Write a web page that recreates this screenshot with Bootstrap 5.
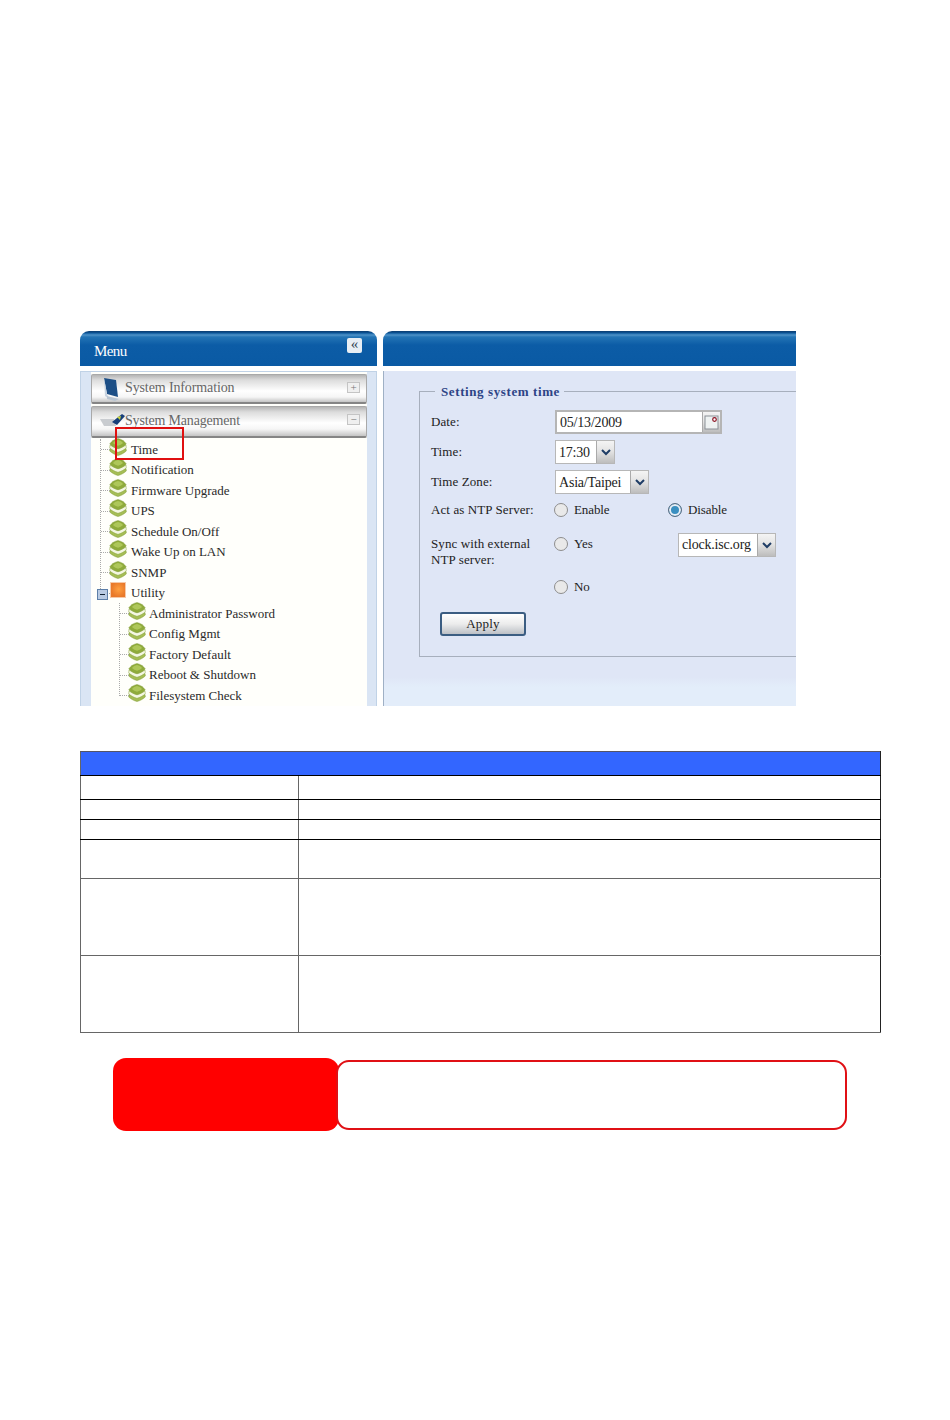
<!DOCTYPE html>
<html lang="en">
<head>
<meta charset="utf-8">
<title>System time</title>
<link rel="stylesheet" href="https://cdn.jsdelivr.net/npm/bootstrap@5.3.0/dist/css/bootstrap.min.css">
<style>
body{background:#fff;font-family:"Liberation Serif",serif;color:#222;font-size:13px;margin:0}
.page-wrap{padding-top:331px;height:1420px;overflow:hidden}
.shot{margin-left:80px;width:716px;height:375px;overflow:hidden}
.left-col{width:297px;flex:none;position:relative}
.right-col{width:413px;flex:none;margin-left:6px}
.blue-head{height:35px;border-radius:9px 9px 0 0;background:linear-gradient(#0b4279 0,#0b4279 1px,#0d5a9f 2px,#4f93c8 4px,#2374b5 6px,#0c5ca6 14px,#0a5aa4 100%);color:#fff;font-size:15px;padding:11px 0 0 14px;position:relative;line-height:18px;letter-spacing:-.6px}
.right-col .blue-head{border-radius:9px 0 0 0}
.collapse-btn{position:absolute;top:7px;right:15px;width:15px;height:15px;background:#e8eef4;border-radius:2px;color:#345;font-size:15px;line-height:12px;text-align:center;letter-spacing:0}
.panel-left{margin-top:5px;height:335px;background:#dae5f4;border:1px solid #c0d2e6;border-bottom:0;padding:0 9px 0 10px}
.panel-inner{background:#fffffb;height:100%;margin:0;position:relative}
.acc-head{height:30px;margin-bottom:2px;border:1px solid #a9a9a9;border-bottom:2px solid #858585;background:linear-gradient(#b5b5b5 0,#dcdcdc 5px,#fff 16px,#f6f6f6 22px,#c4c4c4 100%);color:#666;font-size:14px;line-height:20px;padding:3px 0 0 33px;position:relative;border-radius:2px;letter-spacing:-.12px}
.acc-head+.acc-head{height:32px;margin-bottom:0;padding-top:4px;letter-spacing:-.17px}
.acc-top{padding-top:2px}
.acc-ico{position:absolute;left:9px;top:2px}
.acc-ico-wide{left:8px;top:5px}
.acc-sign{position:absolute;right:6px;top:7px;width:13px;height:11px;background:#efefef;border:1px solid #c4c4c4;color:#777;font-size:11px;line-height:9px;text-align:center}
.tree-list{list-style:none;margin:0;padding:0 0 0 10px;border-left:1px dotted #aaa;margin-left:9px}
.tree-list>li{height:20.5px;display:flex;align-items:center;font-size:13px;position:relative;white-space:nowrap;color:#2a2a2a}
.tree-list>li::before{content:"";position:absolute;left:-10px;top:10px;width:9px;border-top:1px dotted #aaa}
.tree-list>li:last-child::after{content:"";position:absolute;left:-11px;top:11px;bottom:0;width:1px;background:#fffffb}
.tree-list svg{flex:none;margin-right:4px;margin-top:-5px;margin-left:-2px}
.tree-first{margin-top:1px}
.nested-list{margin-left:28px;padding-left:10px}
.nested-list svg{margin-right:3px}
.minus-box{position:absolute;left:-14px;top:6px;width:11px;height:11px;background:#b9cbe3;border:1px solid #5d7fa8;z-index:1}
.minus-box::after{content:"";position:absolute;left:2px;top:4px;width:5px;height:1px;background:#123}
.orange-box{width:16px;height:16px;flex:none;margin:-5px 5px 0 -1px;background:radial-gradient(circle at 55% 45%,#ffa040,#e9792a 70%);border:1px solid #f6c9a8}
.red-mark{position:absolute;left:24px;top:55px;width:69px;height:33px;border:2px solid #e01010;z-index:2}
.panel-right{margin-top:5px;height:335px;background:linear-gradient(#dfe6f6 0,#dfe6f6 306px,#e3edfa 316px,#e3edfa 100%);border-left:1px solid #9fb0c5;padding:10px 0 0 35px;position:relative}
.panel-right fieldset{border:1px solid #a7afbd;border-right:0;width:420px;height:276px;padding:0 0 0 11px;margin:0}
.panel-right legend{float:none;width:auto;font-size:13px;font-weight:700;color:#2d4486;margin:0 0 0 4px;padding:2px 4px 0 6px;line-height:18px;letter-spacing:.6px}
.form-lines{margin-top:6px}
.form-line{display:grid;grid-template-columns:124px 114px 1fr;align-items:center;letter-spacing:.1px}
.line-a,.line-b,.line-c{height:30px}
.line-d{height:26px}
.line-e{height:32px;align-items:start;margin-top:10px;line-height:16px}
.line-e>span:first-child,.line-e .radio-opt{padding-top:3px}
.line-f{height:44px}
.combo{display:inline-flex;height:24px;border:1px solid #b7b7b7;background:#fff;font-size:14px;color:#222;align-items:center;letter-spacing:-.2px}
.combo-txt{padding-left:3px;flex:1;white-space:nowrap}
.combo-arrow{width:18px;height:100%;flex:none;background:linear-gradient(#f4f4f4 0,#e4e4e4 45%,#bdbdbd 100%);border-left:1px solid #aaa;display:flex;align-items:center;justify-content:center}
.combo-date{width:167px;border-width:2px;border-color:#b5b5b5}
.combo-time{width:60px}
.combo-zone{width:94px}
.combo-clock{width:98px;margin-left:9px}
.radio-opt{display:flex;align-items:center;gap:6px;margin:0 0 0 -1px;letter-spacing:-.1px}
.radio-opt .form-check-input{width:14px;height:14px;margin:0;background-color:#e9e9e9;border:1px solid #8d8d8d;float:none;flex:none}
.radio-opt .form-check-input:checked{background-color:#3a8fc0;border-color:#5e6f82;background-image:none;box-shadow:inset 0 0 0 2px #e8eef5}
.apply-btn{width:86px;height:24px;padding:0;background:linear-gradient(#fff 0,#ececec 50%,#bcc0c6 100%);border:2px solid #3b5d82;border-radius:3px;color:#222;font-size:13px;line-height:20px;margin:3px 0 0 9px;letter-spacing:.2px;font-family:"Liberation Serif",serif}
.spec-table{width:801px;height:282px;margin:45px 0 0 80px;border-collapse:collapse;table-layout:fixed}
.col-key{width:218px}
.spec-table td{border:1px solid #666;padding:0;background:#fff}
.spec-table tr:nth-child(n+2):nth-child(-n+4) td{border-bottom-color:#000}
.spec-table tr:first-child td{border-bottom-color:#000;border-top-color:#556}
.spec-table td:last-child{border-right-color:#222}
.spec-table .blue-cell{background:#3366ff}
.rh-a{height:24px}.rh-b{height:20px}.rh-c{height:39px}.rh-d{height:77px}
.note-wrap{margin:25px 0 0 113px;width:734px;height:73px;position:relative}
.note-label{position:absolute;left:0;top:0;width:226px;height:73px;background:#ff0000;border-radius:13px;z-index:1}
.note-body{position:absolute;left:223px;top:2px;right:0;height:70px;border:2px solid #e01015;border-radius:13px;background:#fff;z-index:2}
</style>
</head>
<body>
<svg width="0" height="0" class="position-absolute">
<symbol id="stack" viewBox="0 0 18 18">
<path d="M1 10.500C3 11 6 13 9 13.500 12 13 15 11 17 10.500L17.300 13C15 15 12 16.800 9 17.500 6 16.800 3 15 .7 13z" fill="#a5bd55" stroke="#7f9a35" stroke-width=".5"/>
<path d="M1 7C3 8 6 10 9 10.500 12 10 15 8 17 7L17.300 9.800C15 12 12 13.500 9 14.300 6 13.500 3 12 .7 9.800z" fill="#f4f7e2" stroke="#8aa540" stroke-width=".5"/>
<path d="M9 .5C12 1 15.500 3 17.300 6 15 8.500 12 10 9 10.800 6 10 3 8.500.7 6 2.500 3 6 1 9 .5z" fill="#8fab3b" stroke="#7a9630" stroke-width=".4"/>
<path d="M9 2C11 2.300 13 3.500 14 5 12.500 6.500 10.800 7.300 9 7.800 7.200 7.300 5.500 6.500 4 5 5 3.500 7 2.300 9 2z" fill="#aec75a"/>
</symbol>
<symbol id="chev" viewBox="0 0 10 7"><path d="M1 1 5 5 9 1" fill="none" stroke="#1f3d66" stroke-width="2"/></symbol>
</svg>
<div class="page-wrap">
<div class="shot d-flex">
  <div class="left-col">
    <div class="blue-head">Menu<span class="collapse-btn">«</span></div>
    <div class="panel-left">
      <div class="panel-inner">
        <div class="acc-top"></div>
        <div class="acc-head">
          <svg class="acc-ico" width="20" height="25" viewBox="0 0 20 25"><path d="M3 1 15 3 17 20 6 17z" fill="#1d4f86"/><path d="M3 1 6 17 8 22 4 19z" fill="#c7d3e0"/><path d="M6 19 18 22 14 24 6 22z" fill="#b9c5d2"/></svg>
          System Information<span class="acc-sign">+</span>
        </div>
        <div class="acc-head">
          <svg class="acc-ico acc-ico-wide" width="26" height="18" viewBox="0 0 26 18"><path d="M0 7 14 7 16 14 4 14z" fill="#c9ccd0"/><path d="M12 10 22 2 25 4 17 13z" fill="#173f7a"/><path d="M17 5 21 4 20 8z" fill="#c9d33a"/></svg>
          System Management<span class="acc-sign">−</span>
        </div>
        <ul class="tree-list tree-first">
          <li><svg width="18" height="18"><use href="#stack"/></svg>Time</li>
          <li><svg width="18" height="18"><use href="#stack"/></svg>Notification</li>
          <li><svg width="18" height="18"><use href="#stack"/></svg>Firmware Upgrade</li>
          <li><svg width="18" height="18"><use href="#stack"/></svg>UPS</li>
          <li><svg width="18" height="18"><use href="#stack"/></svg>Schedule On/Off</li>
          <li><svg width="18" height="18"><use href="#stack"/></svg>Wake Up on LAN</li>
          <li><svg width="18" height="18"><use href="#stack"/></svg>SNMP</li>
          <li><span class="minus-box"></span><span class="orange-box"></span>Utility</li>
        </ul>
        <ul class="tree-list nested-list">
          <li><svg width="18" height="18"><use href="#stack"/></svg>Administrator Password</li>
          <li><svg width="18" height="18"><use href="#stack"/></svg>Config Mgmt</li>
          <li><svg width="18" height="18"><use href="#stack"/></svg>Factory Default</li>
          <li><svg width="18" height="18"><use href="#stack"/></svg>Reboot &amp; Shutdown</li>
          <li><svg width="18" height="18"><use href="#stack"/></svg>Filesystem Check</li>
        </ul>
        <div class="red-mark"></div>
      </div>
    </div>
  </div>
  <div class="right-col">
    <div class="blue-head"></div>
    <div class="panel-right">
      <fieldset>
        <legend>Setting system time</legend>
        <div class="form-lines">
          <div class="form-line line-a"><span>Date:</span><span class="combo combo-date"><span class="combo-txt">05/13/2009</span><span class="combo-arrow"><svg width="15" height="15" viewBox="0 0 15 15"><rect x="1" y="1" width="13" height="13" fill="#eef2f2" stroke="#8a8f96"/><circle cx="10.500" cy="4.500" r="1.800" fill="#fff" stroke="#8a1020" stroke-width="1.200"/></svg></span></span></div>
          <div class="form-line line-b"><span>Time:</span><span class="combo combo-time"><span class="combo-txt">17:30</span><span class="combo-arrow"><svg width="10" height="7"><use href="#chev"/></svg></span></span></div>
          <div class="form-line line-c"><span>Time Zone:</span><span class="combo combo-zone"><span class="combo-txt">Asia/Taipei</span><span class="combo-arrow"><svg width="10" height="7"><use href="#chev"/></svg></span></span></div>
          <div class="form-line line-d"><span>Act as NTP Server:</span><label class="radio-opt"><input class="form-check-input" type="radio" name="ntp">Enable</label><label class="radio-opt"><input class="form-check-input" type="radio" name="ntp" checked>Disable</label></div>
          <div class="form-line line-e"><span>Sync with external<br>NTP server:</span><label class="radio-opt"><input class="form-check-input" type="radio" name="sync">Yes</label><span><span class="combo combo-clock"><span class="combo-txt">clock.isc.org</span><span class="combo-arrow"><svg width="10" height="7"><use href="#chev"/></svg></span></span></span></div>
          <div class="form-line line-f"><span></span><label class="radio-opt"><input class="form-check-input" type="radio" name="sync">No</label><span></span></div>
          <button type="button" class="btn apply-btn">Apply</button>
        </div>
      </fieldset>
    </div>
  </div>
</div>
<table class="spec-table">
  <colgroup><col class="col-key"><col></colgroup>
  <tr class="rh-a"><td colspan="2" class="blue-cell"></td></tr>
  <tr class="rh-a"><td></td><td></td></tr>
  <tr class="rh-b"><td></td><td></td></tr>
  <tr class="rh-b"><td></td><td></td></tr>
  <tr class="rh-c"><td></td><td></td></tr>
  <tr class="rh-d"><td></td><td></td></tr>
  <tr class="rh-d"><td></td><td></td></tr>
</table>
<div class="note-wrap">
  <div class="note-label"></div>
  <div class="note-body"></div>
</div>
</div>
</body>
</html>
